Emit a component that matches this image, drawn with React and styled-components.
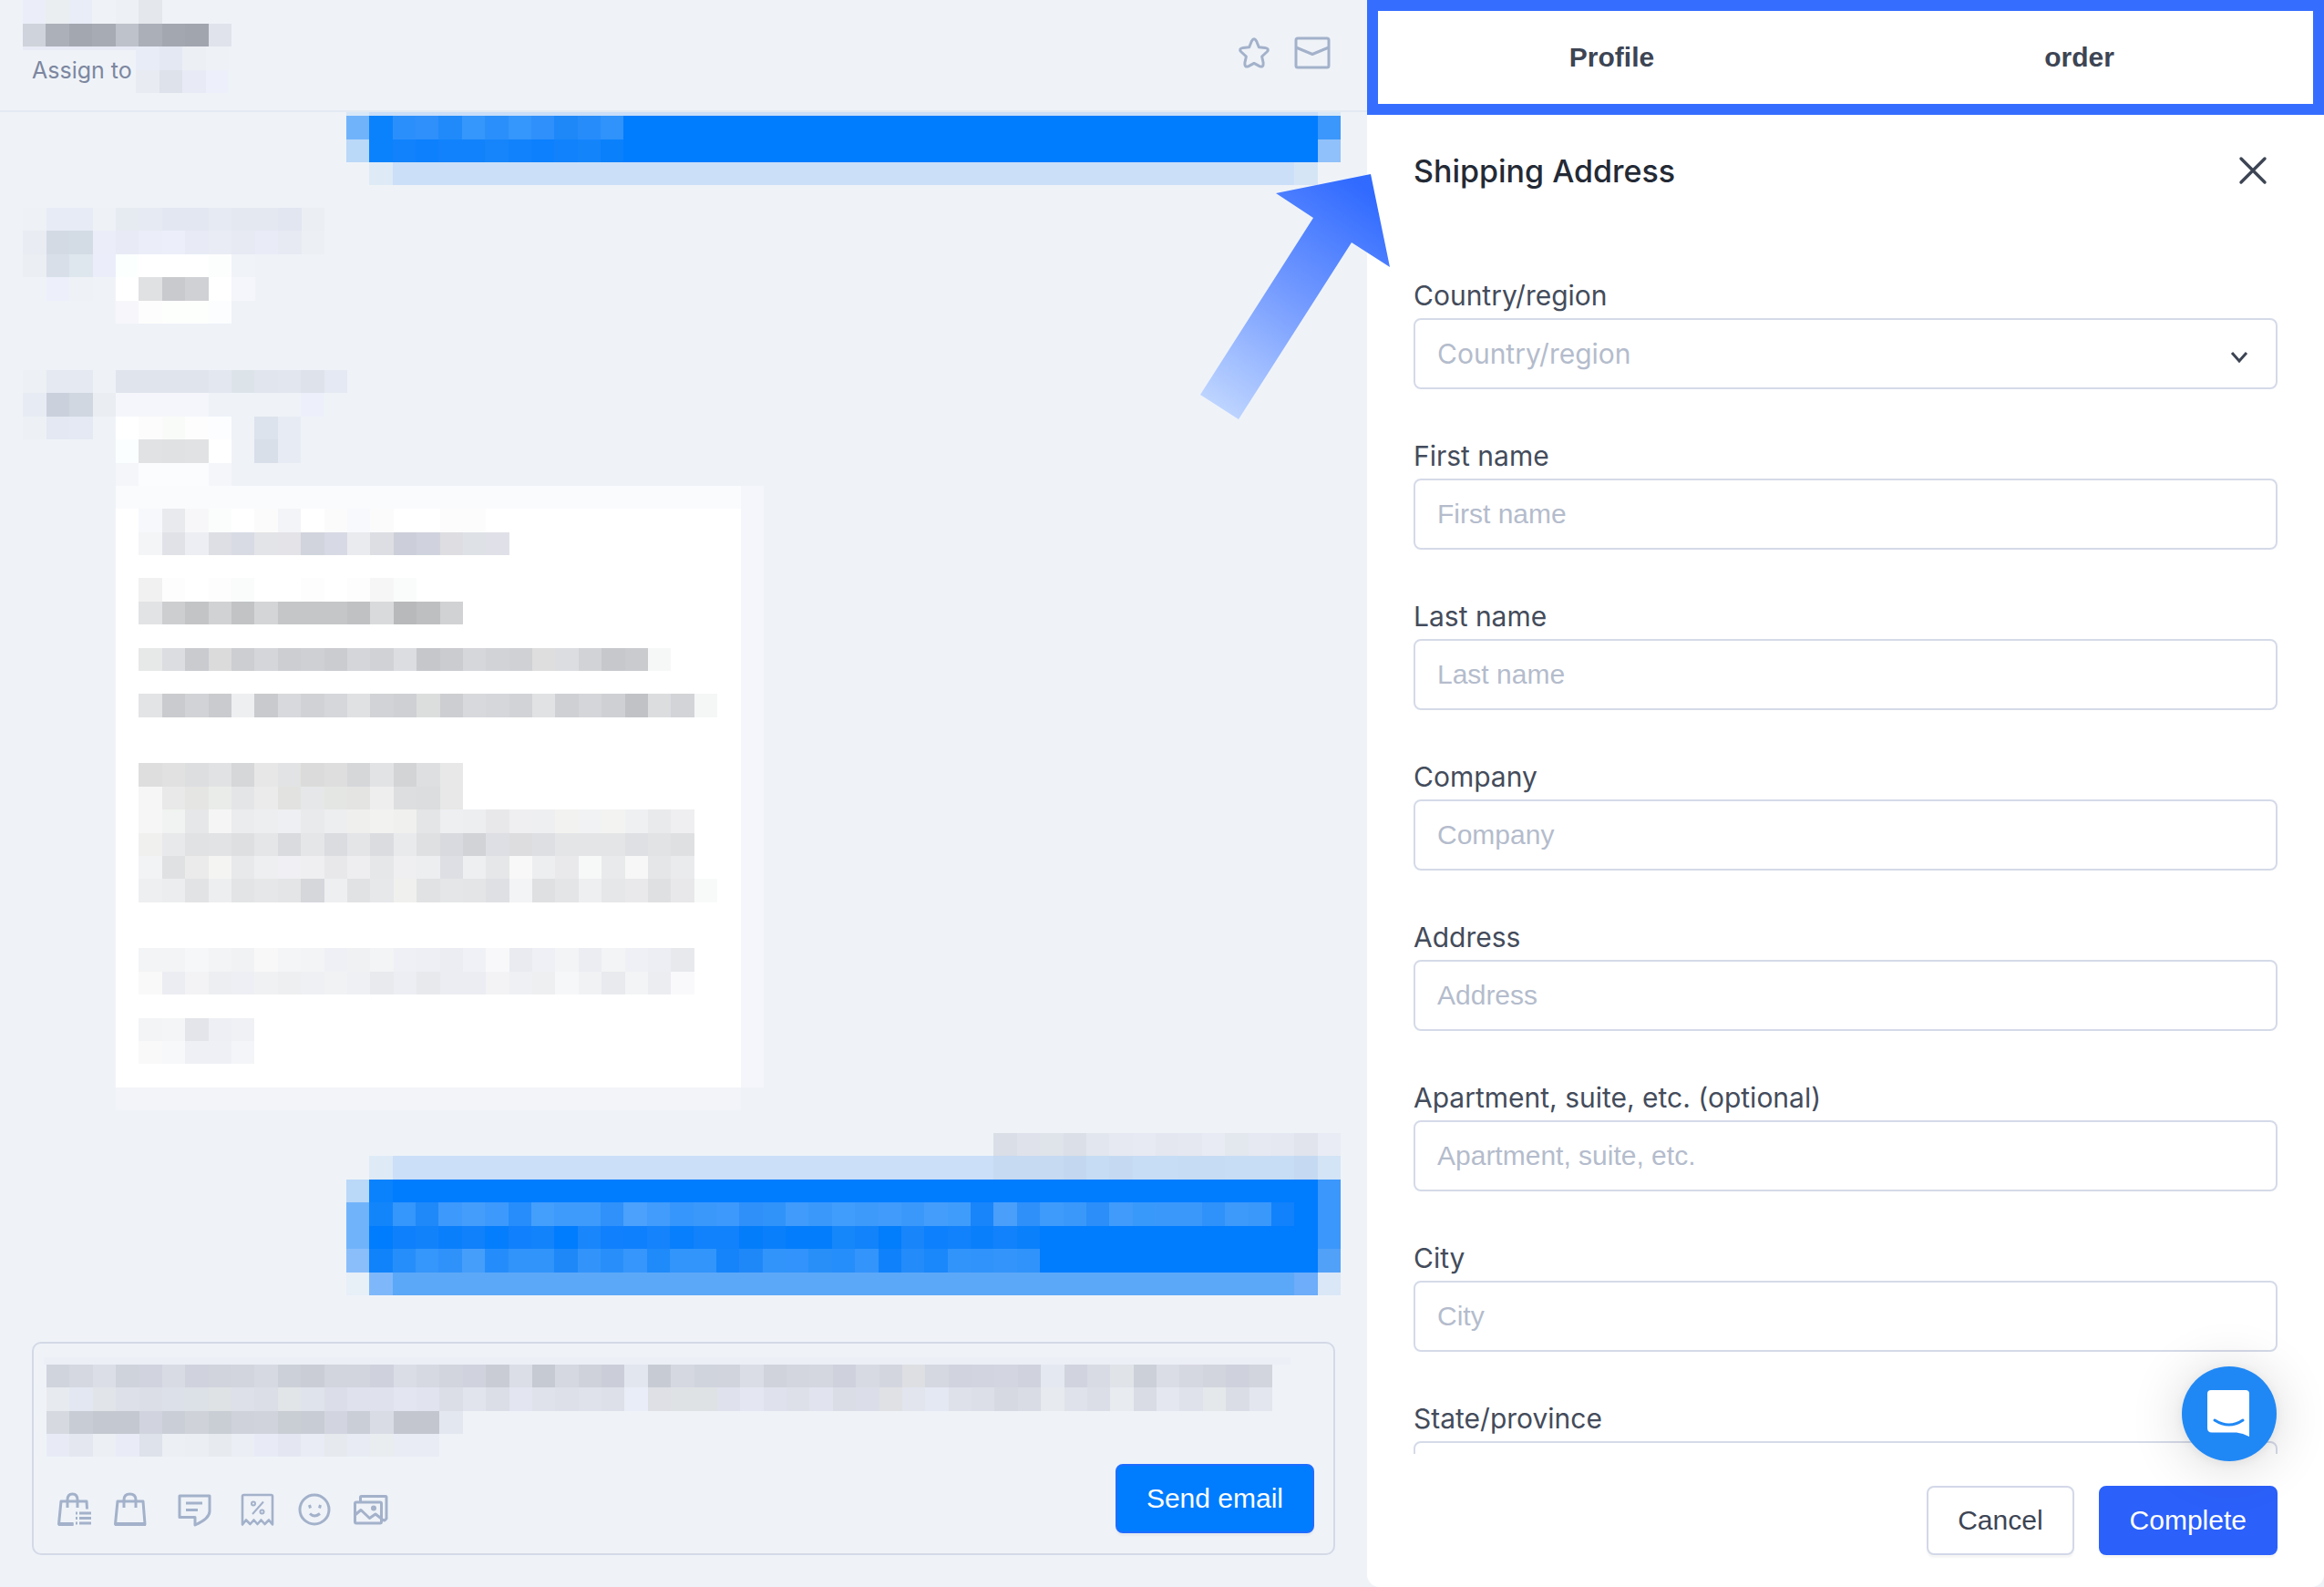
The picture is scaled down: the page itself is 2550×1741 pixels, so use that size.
import React, { useState } from "react";
import styled, { createGlobalStyle } from "styled-components";

// size of one censored block, every mosaic sits on the same grid
const CELL = 25.36;

const nameRows = [
  [0, 0, "ebeef8 ebeef1 e9edf7 eff3f7 edf0f4 e4e7eb"],
  [1, 0, "cfd3db acb0b9 a3a7b0 a7abb3 bec2cb abafb8 a3a7b0 a1a5ae e0e3eb"],
];

const assigneeRows = [
  [0, 0, "e8ecf6 e4e8f2 eceff4 eef1f6"],
  [1, 0, "e8ebf1 dee2eb e8ebf5 edf0fa"],
];

const firstAvatar = [
  [0, 0, "eef1f5 e7ebf5*2 eef1f6"],
  [1, 0, "e9edf3 d3dae4 d3dbe4 ebeef9"],
  [2, 0, "ebeef3 d8dfe9 dee6ee ebeefa"],
  [3, 1, "edf0fa eef1f6"],
];

const firstBody = [
  [0, 0, "e6eaf1 e6eaf2 e3e7f1*2 e6eaf3 e4e8f1*2 e2e6f1 ebeef3"],
  [1, 0, "e8ebf5 ebeef8 eceff9 e8ebf5 e9ecf4 e7eaf3 e9ecf6 e7eaf3 eceff4"],
  [2, 0, "fbfffe ffffff*3 fcfdfd f0f3f8"],
  [3, 0, "ffffff e0e1e2 c9cacd d0d1d4 ffffff f5f6fb"],
  [4, 0, "f6f6fb fdfdfd fdfffd*2 fbfdff"],
];

const secondAvatar = [
  [0, 0, "edf0f4 e4e9f2*2 eef1f6"],
  [1, 0, "e7ebf4 cad0dc d0d7e0 eaedf2"],
  [2, 0, "edf0f5 e3e8f2 e4e9f3"],
];

const secondBody = [
  [0, 0, "dfe4ed e0e4ed*3 e3e8f0 dce4ea e1e5ed e2e6ee dee2ea e5e9f3"],
  [1, 0, "f5f6fb*4"],
  [1, 8, "edf0fa"],
  [2, 0, "ffffff fcfcfc f9fbf9 fdfdfd fbfdff"],
  [2, 6, "dce3ec e7ecf4"],
  [3, 0, "fbfeff e1e2e3 e0e1e2 e1e2e3 ffffff"],
  [3, 6, "d8dfe9 e7ecf4"],
  [4, 0, "f5f6fa fafcfe*3 f4f6fa"],
];

const cardFills = [
  [0, 0, 28, 1, "#fafbfd"],
  [0, 1, 27, 25, "#ffffff"],
  [27, 0, 1, 26, "#f5f6fb"],
  [0, 26, 27, 1, "#f3f4f9"],
];

const cardRows = [
  [1, 1, "f7f8fb e9eaee f7f7fa fafdfc ffffff fbfbfb f3f4f7 ffffff fbfbfb f8f9fc fbfbfb ffffff*2 fcfcfc*2"],
  [2, 1, "f4f5f7 e1e2e8 edeef3 dedfe4 d8dbe4 e3e4e8 e3e3e8 d1d4dd d7dae4 eaebef dddee3 cccfda d0d3dd dddde2 dee2e7 e0e1e8"],
  [4, 1, "f1f1f1 fdfdfd ffffff fcfdfc f9fcfb ffffff*2 fdfdfd ffffff fdfdfd f6f6f6 f9fcfb"],
  [5, 1, "e2e3e4 cdced0 c3c4c6 d1d2d3 c2c3c5 d4d5d7 c5c6c8*3 c0c1c3 d9dadc b8b9bb bebfc1 d1d2d4"],
  [7, 1, "e7e8e8 dcdde1 cacbcf dbdbdc cdced1 d5d6da cdced2 cfd0d4 cbccd0 d5d6da d1d2d6 dcdde1 c6c7cb cbccd0 d6d7db d2d3d7 d0d1d5 dededf dcdde1 d2d3d6 c7c8cc cacbcf f6f8f7"],
  [9, 1, "e3e4e5 cacbcf d2d3d7 cacbcf eeeff1 c9cacd d8d9dd d1d2d5 d6d7db e0e1e2 d2d3d6 cfd0d4 dcdddd cdced2 d8d9dd d6d7db d2d3d7 e1e2e3 cfd0d3 d5d6da cfd0d4 c1c2c6 dcdddf d3d4d8 f5f7f6"],
  [12, 1, "dedede e1e1e1 dddedf e1e2e3 d6d7d9 e7e7e7 e2e3e4 dbdbdb dedede d6d7d9 e2e3e5 d3d4d6 dedfe0 e8e8e8"],
  [13, 1, "f6f6f6 e9e9e9 e5e5e4 eaecea e4e5e7 ebebeb e2e2e1 e6e7e9 e4e6e4 e4e4e3 eeeeee dddedf dcddde e7e8e7"],
  [14, 1, "f6f6f6 f0f3f1 e6e7e9 f5f5f5 ebecee edeef0 eeeff2 e9eaeb edeef0 efefed f2f2f1 f0f0ee e4e5e6 eeeff1 edeef0 e8e8ea efeff1 eeeff0 f2f2f0 f1f2f3 f3f3f2 eff0f2 e9eaec efeff1"],
  [15, 1, "f0f0ef e8e9eb e1e2e3 e2e3e4 dedfe0 e5e6e8 dadbdf e5e6e8 dadce0 e4e5e7 dbdce0 e9eaec dfe0e1 d9dadf d2d3d7 dedfe4 dddddf dedfe3 e4e5e7 e4e5e6*2 dfe0e4 e2e3e4 dfe0e1"],
  [16, 1, "f2f3f4 e0e1e2 ebebec f4f4f2 e8e9ea eeeff1 f0f0f4 efeff1 e8e8ea eeeef0 e6e7e9 efeff1 edeef0 dedfe4 eeeff1 e6e7e9 f8f8f8 edeeef e9e9eb f7f9f8 e9eaec f7f7f7 e5e6e7 eaebed"],
  [17, 1, "eeeff1 ecedef e2e3e5 edeef0 e3e4e5 e6e7e8 e4e5e6 d6d7db eeeff0 e1e2e3 e7e8ea f0f0ee e1e2e3 e5e6e7 e4e5e6 dfe0e4 f3f4f6 dfe0e1 e4e5e6 eeeff0 e6e7e8 e9e9eb dfe0e1 e8e8ea f8faf9"],
  [20, 1, "f3f4f5*2 f6f7f8 f3f4f5 f1f2f3 f8f8f8 f4f5f6 f3f4f6 eff0f5 f0f1f3 f3f4f5 eff0f5 eeeff4 ecedf2 f0f1f6 f8f8fa eaebf0 eff0f5 f3f4f5 ecedf2 f3f4f5 eff0f5 edeef3 e8e9ed"],
  [21, 1, "f9f9f9 ecedf2 f3f3f5 edeef1 eeeff4 f0f1f3 eeeff1 eff0f4 f1f2f4 eff0f4 e9eaee edeef3 e8e9ed ecedf2*2 f3f3f5 eff0f4 eeeff1 f6f7f8 f1f2f4 e9eaee f3f4f5 ecedf1 f9f9fb"],
  [23, 1, "f3f4f6 f4f5f6 e4e5ea eeeff4 f0f1f4"],
  [24, 1, "f9f9f9 f6f8fa eff0f5 eff0f6 f4f5f8"],
];

const topBubbleRows = [
  [0, 0, "d9e8f7 c9def8*41 d9e8f7"],
  [1, 0, "70b3fb 0a82fc 2b8ffb 2f90fb 218afa 3596fb 2a8ffa 3596fb 2f90fb 1e88f9 268cfa 2f93fb 007cff*30 3b97fb"],
  [2, 0, "bad8f8 0a82fc 1182fb 0c80fd 1182fb*2 1685fb 1182fb 0c80fd 1182fb 1484fb 0a80fb 007cff*30 90c1fa"],
  [3, 1, "dfeaf7 cbdff8*39 d6e5f6"],
];

const lastBubbleRows = [
  [0, 28, "dadee6 dfe2ea dfe3ea dbdfe7 e2e6ee e6e9f2 e7eaf2 e4e7f0 e5e8f1 e8ebf3 e3e7ee e6e9f2 e5e8f1 e1e4ed e9ecf4"],
  [1, 1, "dfeaf7 cbdff8*26 c6daf2*3 c3d7f0 c6dcf5 c5daf2 c7ddf6*2 c6dcf4*2 c7ddf5*3 c5daf2 d2e4f6"],
  [2, 0, "bad8f8 0a82fc 007cff*40 3b97fb"],
  [3, 0, "70b3fb 1285fb 3596fb 2089f9 3d99fb 459dfb 3d99fb 268dfb 449efb 3f9bfb*2 2f91f9 4ba1fb 429cfb 3796fb 3b98fb 3d99fb 2f90fa 3093fa 409bfb 3b98fb 409dfb 3d9afb 409bfb 3b98fb 459dfb 409cfb 1985fa 4a9ffb 2f90fa 3f9bfb 3a98fa 2b8ef9 409bfb 3999fa 3b98fb*2 2f91fa 3d99fa 3a98fb 1182fb 007cff 3b97fb"],
  [4, 0, "70b3fb 007cff 0f80fb 1282fb 0a7ffb 1080fb 047efc 1180fd 1283fb 007cff 1986fb 1080fd 0f80fd 1583fb 087ffc 1182fb*2 047dfb 0a7ffb 037dfb*2 1686fb 1283fa 027dfb 1885fb 0c80fd 1182fb 0a7ffb 1182fb 0a80fb 007cff*12 3b97fb"],
  [5, 0, "8abefb 1083fb 268efa 3596fb 2f92fb 469efb 258dfb 3194fb*2 1e88f9 3294fb 288ffa 3796fb 1f8afa 3195fb*2 1584fa 1f88f9 3194fb 3193fb 288ff9 268efa 3394fb 0f81fb 238cfa 1a87fa 3194fb 3093fb 3395fb 3093fb 007cff*12 51a1f9"],
  [6, 0, "e7eff7 7fb8fa 5ca8f8*39 6dadfa dae7f6"],
];

const draftRows = [
  [0, 0, "d0d4dc d5d8e1 dbdee7 cfd3dc d1d4de d8dbe4 d0d3dd d1d4dd d2d5de d6d9e2 ccd0d9 cacdd6 d2d4de d2d5de cfd2dc dadde6 d6d9e2 d2d5dd d0d3dd c9ccd5 dbdee7 c6cad2 d5d8e1 cfd2db cbced8 e2e6ef c7cbd4 d5d8e1 d0d4dd d1d4dd dadde6 d0d3dc d3d6df d4d7e0 cfd2dc d8dae3 d4d6df dddfe3 d5d8e1 d1d4de d2d5df d3d6e0 d0d3dd e4e8f1 d1d4de d8dbe3 e0e3e8 ccd0d9 dbdde6 d6d8e1 d2d5de cfd2dc d2d5dd"],
  [1, 0, "e7eaee e3e7f1 e1e4e8 dde0e9 dbdee7 dce0e8 dce0e7 dfe2e5 dddfe9 dcdee7 e2e5e8 dfe3eb dbdee8 dfe2ec*2 e3e6f0 e1e4ee dcdee7 e1e4ed dbdee7 e3e6f0 dfe1eb dde0e9 dfe1eb dde0e9 e9edf7 dee0e5 dfe2e5 dfe2e4 dfe2ec e4e7f1 dfe2ec dde0e9 e1e4ee dadde6 dbdee8 dfe1e5 e2e5ee e4e8f2 dee1ea dcdee8 d6d9e2 d9dce5 e7eaee dfe2eb dbdde7 e8ebef d9dce4 e4e7f0 dfe2eb e5e8eb dbdde6 e3e6ee"],
  [2, 0, "d6d9e0 c8ccd4 c4c8d0*2 d1d4de caced7 cfd2d9 c9cdd4 cfd2db d0d3dc c9cdd4 c8ccd4 d2d5df caced7 d9dce5 c3c6cf*2 e3e7f0"],
  [3, 0, "e8ebf5 e4e7f0 eceff4 e9ecf6 dee2eb eceff4 ebeef3 e7eaee ebeef4 e8ebf5 e4e7f1 e9ecf5 e6e9ed e8ebf4 e9edf0 e9ecf5*2"],
];

const textFields = [
  { id: "first-name", label: "First name", placeholder: "First name" },
  { id: "last-name", label: "Last name", placeholder: "Last name" },
  { id: "company", label: "Company", placeholder: "Company" },
  { id: "address", label: "Address", placeholder: "Address" },
  {
    id: "apartment",
    label: "Apartment, suite, etc. (optional)",
    placeholder: "Apartment, suite, etc.",
  },
  { id: "city", label: "City", placeholder: "City" },
  { id: "state", label: "State/province", placeholder: "" },
];

// "d3dae4*3" means three blocks of the same colour
function toRects([row, start, cells]) {
  let x = start;
  return cells.split(" ").map((cell) => {
    const [color, count = 1] = cell.split("*");
    const rect = [x, row, Number(count), 1, `#${color}`];
    x += Number(count);
    return rect;
  });
}

function Mosaic({ cols, lines, rows, fills = [] }) {
  const rects = [...fills, ...rows.flatMap(toRects)];
  return (
    <MosaicSvg
      width={Math.ceil(cols * CELL)}
      height={Math.round(lines * CELL)}
      viewBox={`0 0 ${cols} ${lines}`}
      preserveAspectRatio="none"
      shapeRendering="crispEdges"
      aria-hidden="true"
    >
      {rects.map(([x, y, w, h, color], i) => (
        <rect key={i} x={x} y={y} width={w} height={h} fill={color} />
      ))}
    </MosaicSvg>
  );
}

function LineIcon({ children }) {
  return (
    <svg
      width="40"
      height="40"
      viewBox="0 0 40 40"
      fill="none"
      stroke="currentColor"
      strokeWidth="3"
      strokeLinejoin="round"
      aria-hidden="true"
    >
      {children}
    </svg>
  );
}

function Conversation() {
  return (
    <ChatPanel>
      <ChatHeader>
        <div>
          <Mosaic
            cols={9}
            lines={2}
            rows={nameRows}
            fills={[[0, 2, 5, 0.15, "#e8ebf5"]]}
          />
          <Assign>
            <span>Assign to</span>
            <Mosaic cols={4} lines={2} rows={assigneeRows} />
          </Assign>
        </div>
        <HeaderActions>
          <IconButton aria-label="Star">
            <LineIcon>
              <path d="M14.7 13.7 17.3 7.2Q20 2.5 22.7 7.2L25.3 13.7 32 14.4Q37.5 15.6 34 19L28.6 24 30.1 30.8Q30.6 36.6 26 34.6L20 31.4 14 34.6Q9.4 36.6 9.9 30.8L11.4 24 6 19Q2.5 15.6 8 14.4Z" />
            </LineIcon>
          </IconButton>
          <IconButton aria-label="Mark as unread">
            <LineIcon>
              <rect x="2" y="4" width="36" height="32" rx="2" />
              <path d="M2 14 20 21.5 38 14" />
            </LineIcon>
          </IconButton>
        </HeaderActions>
      </ChatHeader>

      <Messages>
        <Sent>
          <Mosaic cols={43} lines={4} rows={topBubbleRows} />
        </Sent>
        <Received $gap={51}>
          <Mosaic cols={4} lines={5} rows={firstAvatar} />
          <Mosaic cols={9} lines={5} rows={firstBody} />
        </Received>
        <Received $gap={25}>
          <Mosaic cols={4} lines={5} rows={secondAvatar} />
          <div>
            <Mosaic cols={10} lines={5} rows={secondBody} />
            <Mosaic cols={28} lines={27} rows={cardRows} fills={cardFills} />
          </div>
        </Received>
        <Sent>
          <Mosaic cols={43} lines={7} rows={lastBubbleRows} />
        </Sent>
      </Messages>

      <Composer>
        <Mosaic
          cols={53}
          lines={4}
          rows={draftRows}
          fills={[[-0.12, -0.3, 53.9, 0.3, "#eceff6"]]}
        />
        <ComposerBar>
          <Tools>
            <ToolGroup>
              <IconButton aria-label="Orders">
                <LineIcon>
                  <path d="M33.5 19.5 33 11H5L2.5 36H18.5" />
                  <path d="M2 36H18.5" strokeWidth="4" />
                  <path d="M12 18V9.5Q12 3 17.5 3T23 9.5V18" />
                  <path d="M25 24H38M25 29.5H38M25 35H38M21 24H23M21 29.5H23M21 35H23" />
                </LineIcon>
              </IconButton>
              <IconButton aria-label="Products">
                <LineIcon>
                  <path d="M5 11H33L35 36H2.5Z" />
                  <path d="M2 36H36" strokeWidth="4" />
                  <path d="M12 18V9.5Q12 3 18.5 3T25 9.5V18" />
                </LineIcon>
              </IconButton>
            </ToolGroup>
            <IconButton aria-label="Quick replies">
              <LineIcon>
                <path d="M4 5H37V22Q37 30 21 37V28.5H4Z" />
                <path d="M11 13H29M11 20.5H24" />
              </LineIcon>
            </IconButton>
            <ToolGroup>
              <IconButton aria-label="Discounts">
                <LineIcon>
                  <path
                    d="M4 36.5V5.5Q4 4 5.5 4H35.5Q37 4 37 5.5V36.5L33 31.5 28.5 36 24.5 31.5 20.5 36 16.5 31.5 12.5 36 8 31.5Z"
                    strokeWidth="2.6"
                  />
                  <path d="M27 11.5 15 25" strokeWidth="2" />
                  <circle cx="16" cy="13.5" r="2" strokeWidth="2" />
                  <circle cx="25.5" cy="22.5" r="2" strokeWidth="2" />
                </LineIcon>
              </IconButton>
              <IconButton aria-label="Emoji">
                <LineIcon>
                  <circle cx="21" cy="20" r="16" />
                  <path d="M15.5 15 16.5 18.5M27.5 15 26.5 18.5M16 24.5Q21 29.5 27 24.5" />
                </LineIcon>
              </IconButton>
              <IconButton aria-label="Pictures">
                <LineIcon>
                  <path d="M9.5 11V6.5Q9.5 5.5 10.5 5.5H37Q38 5.5 38 6.5V30L36 32 33 31" />
                  <rect x="3.5" y="12" width="29" height="23" rx="1.5" />
                  <path d="M3.5 26 10 20.5 19.5 29.5 26 25 32.5 30" />
                  <circle cx="24" cy="18.5" r="1.5" fill="currentColor" />
                </LineIcon>
              </IconButton>
            </ToolGroup>
          </Tools>
          <Button $kind="send">Send email</Button>
        </ComposerBar>
      </Composer>
    </ChatPanel>
  );
}

function ShippingForm() {
  const [tab, setTab] = useState("Profile");

  return (
    <SidePanel>
      <Tabs role="tablist">
        {["Profile", "order"].map((name) => (
          <Tab
            key={name}
            role="tab"
            aria-selected={tab === name}
            onClick={() => setTab(name)}
          >
            {name}
          </Tab>
        ))}
      </Tabs>
      <PanelHead>
        <h2>Shipping Address</h2>
        <CloseButton aria-label="Close">
          <svg width="32" height="32" viewBox="0 0 32 32" aria-hidden="true">
            <path
              d="M3 3 29 29M29 3 3 29"
              stroke="#3d4554"
              strokeWidth="3.4"
              strokeLinecap="round"
            />
          </svg>
        </CloseButton>
      </PanelHead>
      <Fields>
        <Field>
          <label htmlFor="country">Country/region</label>
          <SelectWrap>
            <Select id="country" defaultValue="">
              <option value="" disabled hidden>
                Country/region
              </option>
            </Select>
            <Chevron width="20" height="14" viewBox="0 0 20 14">
              <path
                d="M2 2 10 11 18 2"
                fill="none"
                stroke="#3d4554"
                strokeWidth="3"
              />
            </Chevron>
          </SelectWrap>
        </Field>
        {textFields.map((field) => (
          <Field key={field.id}>
            <label htmlFor={field.id}>{field.label}</label>
            <Input id={field.id} type="text" placeholder={field.placeholder} />
          </Field>
        ))}
      </Fields>
      <PanelFoot>
        <Button $kind="plain">Cancel</Button>
        <Button $kind="primary">Complete</Button>
      </PanelFoot>

      <Launcher aria-label="Open messenger">
        <svg width="104" height="104" viewBox="0 0 104 104" aria-hidden="true">
          <path
            d="M32 26H70Q74 26 74 30V77Q67 73 60 72.5H33Q28 72.5 28 67.5V30Q28 26 32 26Z"
            fill="#fff"
          />
          <path
            d="M36 59Q52 69 67 59"
            fill="none"
            stroke="#2088f5"
            strokeWidth="3"
            strokeLinecap="round"
          />
        </svg>
      </Launcher>

      <Arrow width="208" height="270" viewBox="0 0 208 270" aria-hidden="true">
        <defs>
          <linearGradient
            id="arrow"
            gradientUnits="userSpaceOnUse"
            x1="20"
            y1="256"
            x2="185"
            y2="20"
          >
            <stop offset="0" stopColor="#bdd4ff" />
            <stop offset="0.5" stopColor="#749bff" />
            <stop offset="1" stopColor="#306aff" />
          </linearGradient>
        </defs>
        <path
          d="M187 1 83 22 124 49 0 243 42 270 166 76 208 103Z"
          fill="url(#arrow)"
        />
      </Arrow>
    </SidePanel>
  );
}

function App() {
  return (
    <>
      <GlobalStyle />
      <Page>
        <Conversation />
        <ShippingForm />
      </Page>
    </>
  );
}

const GlobalStyle = createGlobalStyle`
  * {
    box-sizing: border-box;
  }

  body {
    margin: 0;
    background-color: #eff3f8;
    font-family: Inter, "Liberation Sans", sans-serif;
    color: #444c5b;
  }

  button, input, select {
    margin: 0;
    font-family: inherit;
  }
`;

const Page = styled.div`
  display: grid;
  grid-template-columns: 10fr 7fr;
  height: 100vh;
`;

const MosaicSvg = styled.svg`
  display: block;
  flex-shrink: 0;
  overflow: visible;
`;

const ChatPanel = styled.main`
  display: flex;
  flex-direction: column;
  min-width: 0;
  min-height: 0;
`;

const ChatHeader = styled.header`
  display: flex;
  justify-content: space-between;
  height: 123px;
  padding: 0 40px 0 25px;
  border-bottom: 2px solid #e4eaf2;
`;

const Assign = styled.div`
  display: flex;
  gap: 4px;
  padding-left: 10px;
  font-size: 25px;
  line-height: 52px;
  color: #7d879f;
`;

const HeaderActions = styled.div`
  display: flex;
  align-items: flex-start;
  gap: 24px;
  padding-top: 38px;
`;

const IconButton = styled.button`
  display: block;
  width: 40px;
  height: 40px;
  padding: 0;
  border: 0;
  background: none;
  color: #a3b1ca;
  cursor: pointer;
`;

const Messages = styled.section`
  display: flex;
  flex: 1;
  flex-direction: column;
  justify-content: flex-end;
  min-height: 0;
  padding: 0 29px 51px 25px;
  overflow: hidden;
`;

const Sent = styled.div`
  display: flex;
  flex-shrink: 0;
  justify-content: flex-end;

  &:first-child {
    margin-bottom: 25px;
  }
`;

const Received = styled.div`
  display: flex;
  flex-shrink: 0;
  margin-bottom: ${(props) => props.$gap}px;
`;

const Composer = styled.section`
  margin: 0 35px 35px;
  padding: 23px 21px 22px 14px;
  border: 2px solid #d3d9e6;
  border-radius: 10px;
`;

const ComposerBar = styled.div`
  display: flex;
  justify-content: space-between;
  align-items: flex-end;
  margin-top: 8px;
`;

const Tools = styled.div`
  display: flex;
  gap: 29px;
  padding: 0 0 6px 11px;
`;

const ToolGroup = styled.div`
  display: flex;
  gap: 22px;
`;

const buttonKinds = {
  send: "background-color: #007cff; border-color: #1f6dff; color: white;",
  plain: "background-color: white; border-color: #d3d8e8; color: #3d4554;",
  primary: "background-color: #2b60fa; border-color: #2b60fa; color: white;",
};

const Button = styled.button`
  height: 76px;
  padding: 0 32px;
  border: 2px solid;
  border-radius: 8px;
  box-shadow: 0 3px 2px rgba(0, 0, 0, 0.04);
  font-family: "Liberation Sans", sans-serif;
  font-size: 30px;
  cursor: pointer;
  ${(props) => buttonKinds[props.$kind]}
`;

const SidePanel = styled.aside`
  position: relative;
  display: flex;
  flex-direction: column;
  min-width: 0;
  min-height: 0;
  background-color: white;
  border-radius: 0 0 14px 14px;
`;

const Tabs = styled.div`
  display: flex;
  height: 126px;
  border: 12px solid #356eff;
`;

const Tab = styled.button`
  flex: 1;
  padding: 0;
  border: 0;
  background: none;
  font-family: "Liberation Sans", sans-serif;
  font-size: 30px;
  font-weight: 700;
  color: #3d4554;
  cursor: pointer;
`;

const PanelHead = styled.div`
  display: flex;
  justify-content: space-between;
  align-items: center;
  height: 122px;
  padding: 0 62px 0 51px;

  h2 {
    margin: 0;
    font-size: 34px;
    font-weight: 500;
    color: #242a35;
  }
`;

const CloseButton = styled.button`
  display: flex;
  padding: 0;
  border: 0;
  background: none;
  cursor: pointer;
`;

const Fields = styled.form`
  display: flex;
  flex: 1;
  flex-direction: column;
  gap: 55px;
  min-height: 0;
  padding: 58px 51px 0;
  overflow: hidden;
`;

const Field = styled.div`
  display: flex;
  flex-direction: column;
  flex-shrink: 0;
  gap: 7px;

  label {
    font-size: 30px;
    line-height: 36px;
  }
`;

const Input = styled.input`
  width: 100%;
  height: 78px;
  padding: 0 24px;
  border: 2px solid #d5dae8;
  border-radius: 8px;
  background-color: white;
  font-family: "Liberation Sans", sans-serif;
  font-size: 30px;
  color: #3d4554;

  &::placeholder {
    color: #b4bccc;
    opacity: 1;
  }
`;

const SelectWrap = styled.div`
  position: relative;
`;

const Select = styled.select`
  display: block;
  width: 100%;
  height: 78px;
  padding: 0 24px;
  border: 2px solid #d5dae8;
  border-radius: 8px;
  background-color: white;
  font-size: 30px;
  color: #b4bccc;
  appearance: none;
`;

const Chevron = styled.svg`
  position: absolute;
  top: 36px;
  right: 32px;
  pointer-events: none;
`;

const PanelFoot = styled.footer`
  display: flex;
  justify-content: flex-end;
  gap: 27px;
  padding: 35px 51px;
`;

const Launcher = styled.button`
  position: absolute;
  right: 52px;
  bottom: 138px;
  width: 104px;
  height: 104px;
  padding: 0;
  border: 0;
  border-radius: 50%;
  background-color: #2088f5;
  box-shadow: 0 2px 12px rgba(0, 0, 0, 0.06), 0 4px 60px rgba(0, 0, 0, 0.16);
  cursor: pointer;
`;

const Arrow = styled.svg`
  position: absolute;
  top: 190px;
  left: -183px;
  pointer-events: none;
`;

export default App;
